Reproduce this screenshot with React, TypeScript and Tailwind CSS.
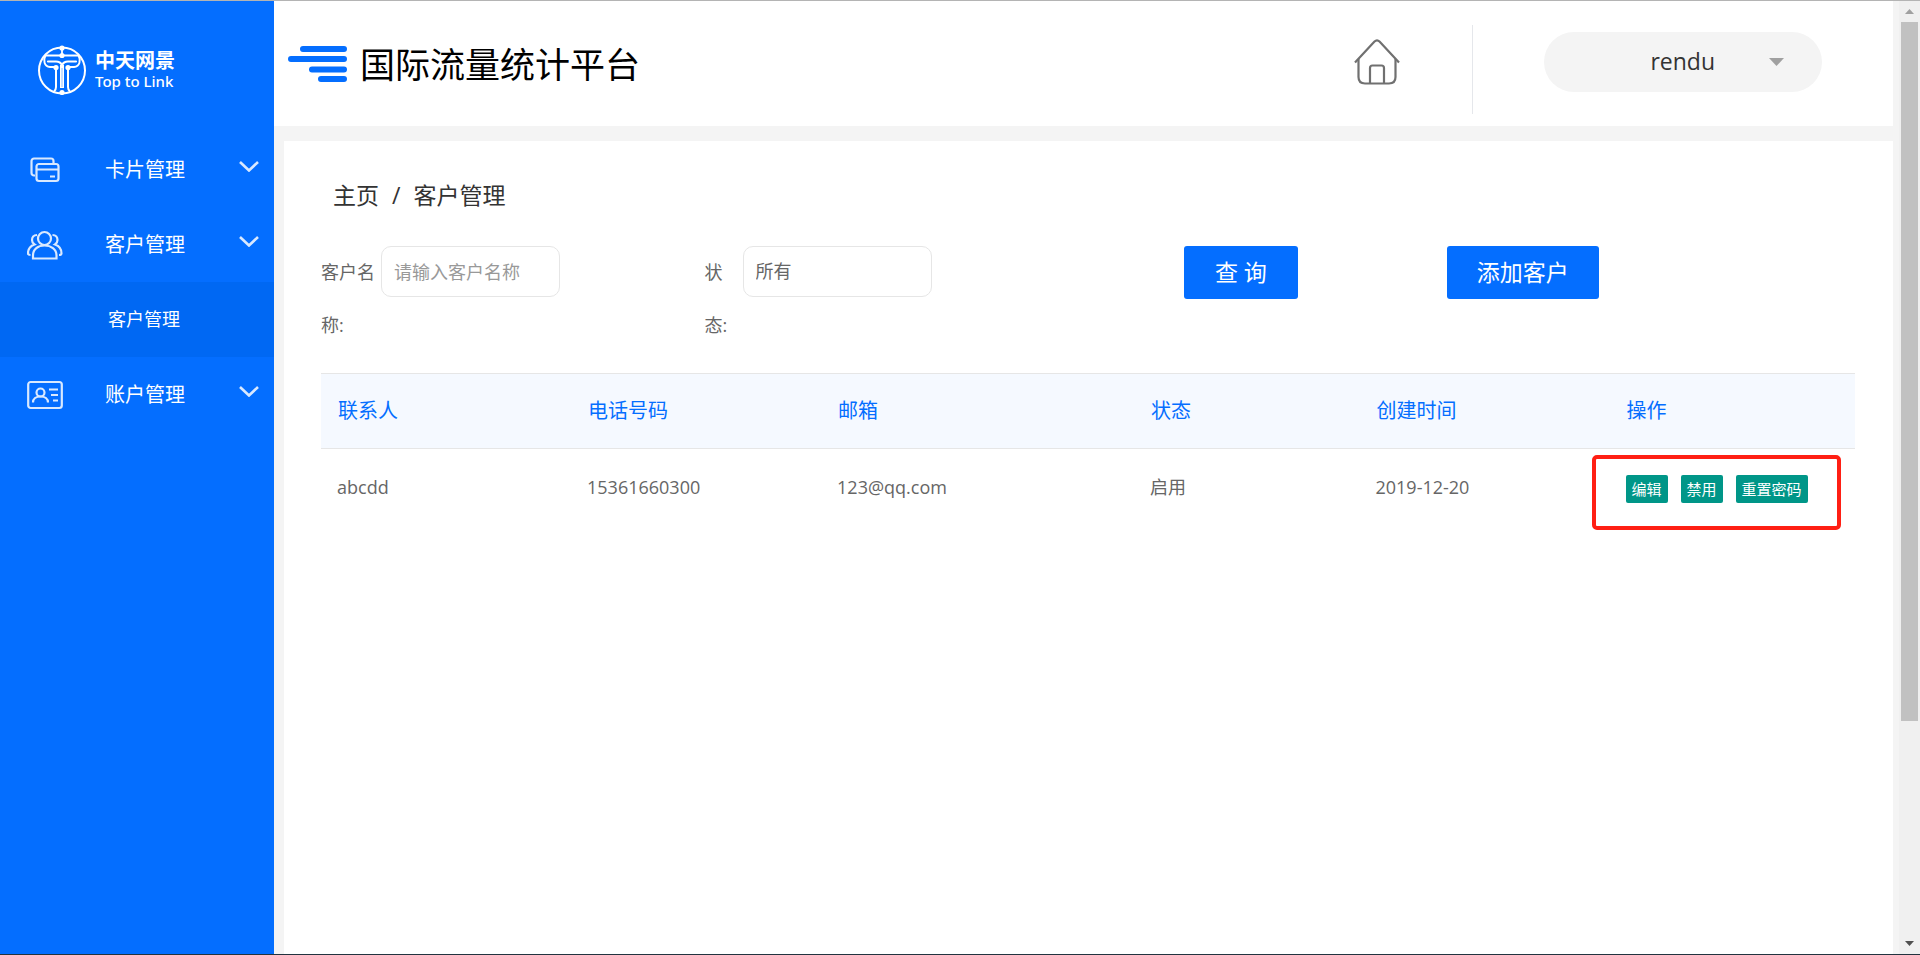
import type { ReactNode } from 'react';

interface Customer {
  contact: string;
  phone:   string;
  email:   string;
  status:  string;
  created: string;
}

const CUSTOMERS: Customer[] = [
  { contact: 'abcdd', phone: '15361660300', email: '123@qq.com', status: '启用', created: '2019-12-20' },
];

const COLUMNS = [
  { title: '联系人',   width: 'w-[16.3%]' },
  { title: '电话号码', width: 'w-[16.3%]' },
  { title: '邮箱',     width: 'w-[20.4%]' },
  { title: '状态',     width: 'w-[14.7%]' },
  { title: '创建时间', width: 'w-[16.3%]' },
  { title: '操作',     width: 'w-[16%]' },
];

const ACTIONS = ['编辑', '禁用', '重置密码'];

function Logo() {
  return (
    <a href="#" className="flex h-[131px] items-center gap-2 pt-1.5 pl-[37px] text-white">
      <svg className="h-[50px] w-[50px]" viewBox="0 0 50 50" fill="none" stroke="currentColor" strokeWidth={2}>
        <circle cx="25" cy="25.500" r="23"/>
        <path d="M25 2v9M8 10.500h34" strokeWidth={1.800}/>
        <path d="M8.500 10.500C6 15 7 21.500 13 22h6M41.500 10.500C44 15 43 21.500 37 22h-6" strokeWidth={1.900}/>
        <path d="M11 16.500h8c3.500 0 5 1.500 6 3.500 1-2 2.500-3.500 6-3.500h8" strokeWidth={2.200} strokeLinecap="round"/>
        <path d="M25 20v23" strokeWidth={4}/>
        <path d="M19 23v19q0 3-2 4.500M31 23v19q0 3 2 4.500" strokeWidth={2}/>
        <path d="M25 23v19" stroke="#8fbeff" strokeWidth={1}/>
        <g fill="currentColor" stroke="none">
          <circle cx="25" cy="3" r="2.600"/>
          <circle cx="25" cy="10.500" r="2.600"/>
          <circle cx="19" cy="22.500" r="2.600"/>
          <circle cx="31" cy="22.500" r="2.600"/>
          <circle cx="25" cy="47.500" r="2.600"/>
        </g>
      </svg>
      <span className="flex flex-col">
        <span className="text-[20px] leading-[22px] font-bold">中天网景</span>
        <span className="font-['Noto_Sans','Noto_Sans_CJK_SC',sans-serif] text-[15px] leading-[18px] font-medium">Top to Link</span>
      </span>
    </a>
  );
}

function CardsIcon() {
  return (
    <svg className="h-[30px] w-[36px]" viewBox="0 0 36 30" fill="none" stroke="currentColor" strokeWidth={2.200} opacity={0.85}>
      <path d="M8 20.500H7a2.500 2.500 0 0 1-2.500-2.500V6A2.500 2.500 0 0 1 7 3.500h17A2.500 2.500 0 0 1 26.500 6v2"/>
      <rect x="9.500" y="9" width="22" height="17" rx="2.500"/>
      <path d="M10 14.500h21M23 21.500h5"/>
    </svg>
  );
}

function PeopleIcon() {
  return (
    <svg className="h-[30px] w-[36px]" viewBox="0 0 36 30" fill="none" stroke="currentColor" strokeWidth={2.200} opacity={0.85}>
      <circle cx="17.500" cy="8.500" r="6.500"/>
      <path d="M6 28.500v-3C6 19 11 15.500 17.500 15.500S29.500 19 29.500 25.500v3z"/>
      <path d="M10 5C6.500 5 5 7.500 5 10c0 2 1 3.500 2.500 4.500C3 16 1 19 1 23.500c0 1 1 1.500 2.500 1.500M25.500 5c3.500 0 5 2.500 5 5 0 2-1 3.500-2.500 4.500 4.500 1.500 6.500 4.500 6.500 9 0 1-1 1.500-2.500 1.500"/>
    </svg>
  );
}

function IdCardIcon() {
  return (
    <svg className="h-[30px] w-[36px]" viewBox="0 0 36 30" fill="none" stroke="currentColor" strokeWidth={2.200} opacity={0.85}>
      <rect x="1.200" y="2" width="33.600" height="26" rx="2.500"/>
      <circle cx="13.500" cy="12.500" r="4"/>
      <path d="M6 22.500c0-3.500 3-6 7.500-6s7.500 2.500 7.500 6M22 9.500h9M24 15h7M26 20.500h5"/>
    </svg>
  );
}

function MenuItem({ icon, label }: { icon: ReactNode; label: string }) {
  return (
    <button type="button" className="flex h-[75px] w-full items-center pr-[15px] pl-[27px] text-[20px] text-white">
      {icon}
      <span className="ml-[42px] flex-1 text-left">{label}</span>
      <svg className="mb-1.5 h-[11px] w-[20px]" viewBox="0 0 20 11" fill="none" stroke="currentColor" strokeWidth={2.600} opacity={0.85}>
        <path d="M1 1l9 8.500L19 1"/>
      </svg>
    </button>
  );
}

function Sidebar() {
  return (
    <aside className="w-[274px] shrink-0 bg-[#046eff]">
      <Logo/>
      <nav>
        <MenuItem icon={<CardsIcon/>} label="卡片管理"/>
        <MenuItem icon={<PeopleIcon/>} label="客户管理"/>
        <a href="#" className="flex h-[75px] items-center bg-[#0068f3] pl-[108px] text-[18px] text-white">客户管理</a>
        <MenuItem icon={<IdCardIcon/>} label="账户管理"/>
      </nav>
    </aside>
  );
}

function Header() {
  return (
    <header className="flex h-[125px] items-center bg-white pr-[71px] pl-3.5">
      <svg className="h-[36px] w-[60px]" viewBox="0 0 60 36" stroke="#046eff" strokeWidth={6} strokeLinecap="round">
        <path d="M15 3h41M3 13h53M24 23.500h32M33 33h23"/>
      </svg>
      <h1 className="mt-1 ml-3 flex-1 text-[35px] text-black">国际流量统计平台</h1>
      <a href="#" aria-label="主页" className="mb-1 mr-[72px]">
        <svg className="h-[46px] w-[46px]" viewBox="0 0 46 46" fill="none" stroke="#707070" strokeWidth={2.200}>
          <path d="M1 23.500L20.500 2.500q2.500-2.500 5 0L45 23.500"/>
          <path d="M4.500 20v18q0 6.500 6.500 6.500h24q6.500 0 6.500-6.500V20"/>
          <path d="M16 44.500V29q0-2.500 2.500-2.500h9Q30 26.500 30 29v15.500"/>
        </svg>
      </a>
      <div className="mt-3 h-[89px] w-px bg-gray-200"/>
      <button type="button" className="mb-1 ml-[71px] flex h-[60px] w-[278px] items-center justify-end rounded-full bg-[#f4f4f4] pr-[38px] text-[23px] text-[#333]">
        rendu
        <svg className="ml-[54px] h-2 w-[15px]" viewBox="0 0 15 8" fill="#a0a0a0"><path d="M0 0h15L7.500 8z"/></svg>
      </button>
    </header>
  );
}

function SearchForm() {
  return (
    <form className="flex items-start text-[18px] text-[#666]">
      <div className="flex w-[25%] items-start">
        <label htmlFor="name" className="w-[60px] leading-[53px]">客户名称:</label>
        <input id="name" type="text" placeholder="请输入客户名称"
          className="h-[51px] w-[179px] rounded-[10px] border border-[#e6e6e6] px-3 placeholder:text-[#999]"/>
      </div>
      <div className="flex flex-1 items-start">
        <label htmlFor="status" className="w-[24px] leading-[53px]">状态:</label>
        <select id="status" className="ml-3.5 h-[51px] w-[189px] appearance-none rounded-[10px] border border-[#e6e6e6] bg-white px-3">
          <option>所有</option>
        </select>
      </div>
      <div className="flex w-[43.750%] shrink-0 gap-[149px]">
        <button type="button" className="h-[53px] rounded-[3px] bg-[#046eff] px-[31px] text-[23px] text-white">查 询</button>
        <button type="button" className="h-[53px] rounded-[3px] bg-[#046eff] px-[30px] text-[23px] text-white">添加客户</button>
      </div>
    </form>
  );
}

function CustomerTable() {
  return (
    <table className="mt-[21px] w-full table-fixed text-left">
      <thead>
        <tr className="h-[75px] border-y border-[#e6e6e6] bg-[#f5f9ff] text-[20px] text-[#046eff]">
          {COLUMNS.map(c => <th key={c.title} className={`${c.width} pl-[17px] font-normal`}>{c.title}</th>)}
        </tr>
      </thead>
      <tbody>
        {CUSTOMERS.map(c => (
          <tr key={c.phone} className="h-[77px] text-[18px] text-[#666]">
            <td className="pl-4">{c.contact}</td>
            <td className="pl-4">{c.phone}</td>
            <td className="pl-4">{c.email}</td>
            <td className="pl-4">{c.status}</td>
            <td className="pl-4">{c.created}</td>
            <td className="relative pl-4">
              <div className="flex gap-[13px] pt-1">
                {ACTIONS.map(a => (
                  <button key={a} type="button" className="h-[28px] rounded-[2px] bg-[#009688] px-1.5 text-[15px] whitespace-nowrap text-white">{a}</button>
                ))}
              </div>
              <div className="pointer-events-none absolute top-1.5 right-3.5 -left-[18px] h-[75px] rounded-[5px] border-4 border-[#ff1f14]"/>
            </td>
          </tr>
        ))}
      </tbody>
    </table>
  );
}

function ScrollBar() {
  return (
    <div className="flex w-[21px] shrink-0 flex-col items-center bg-[#f0f0f0]">
      <svg className="my-2 h-[5px] w-[9px]" viewBox="0 0 9 5" fill="#a0a0a0"><path d="M0 5h9L4.500 0z"/></svg>
      <div className="w-full flex-1 px-0.5">
        <div className="h-[76.700%] bg-[#c1c1c1]"/>
      </div>
      <svg className="my-2 h-[5px] w-[9px]" viewBox="0 0 9 5" fill="#505050"><path d="M0 0h9L4.500 5z"/></svg>
    </div>
  );
}

export default function App() {
  return (
    <div className="flex min-h-screen border-t border-b border-t-[#b4b4b4] border-b-[#22333f] bg-[#f4f4f4] font-['Open_Sans','Noto_Sans_CJK_SC',sans-serif]">
      <Sidebar/>
      <div className="mr-1.5 flex flex-1 flex-col">
        <Header/>
        <main className="mt-[15px] ml-[10px] flex-1 bg-white pr-[38px] pl-[37px]">
          <nav className="flex gap-[13px] pt-9 pl-3 text-[23px] leading-[36px] text-[#333]">
            <a href="#">主页</a>
            <span>/</span>
            <a href="#">客户管理</a>
          </nav>
          <div className="pt-[33px]">
            <SearchForm/>
            <CustomerTable/>
          </div>
        </main>
      </div>
      <ScrollBar/>
    </div>
  );
}
